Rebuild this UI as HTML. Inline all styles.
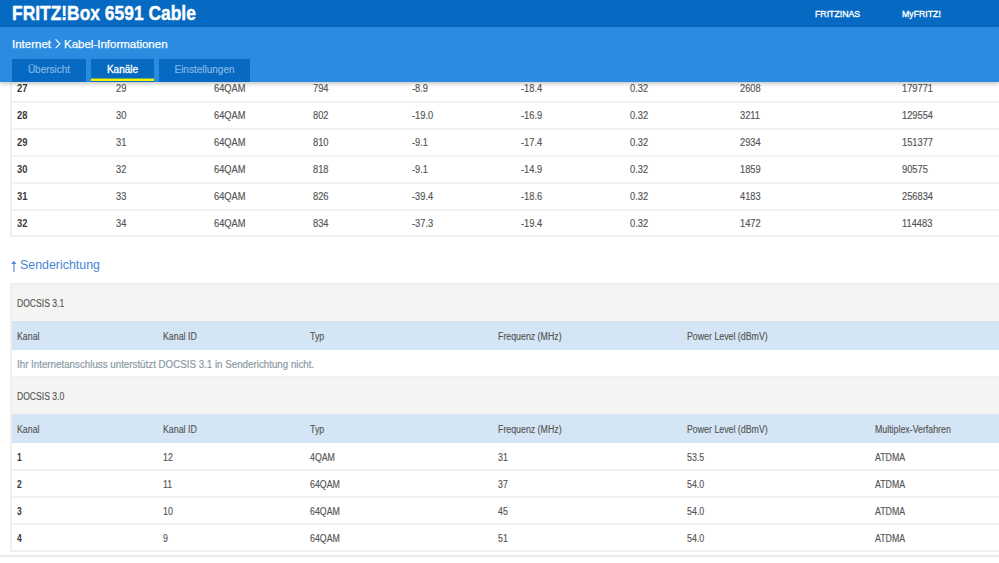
<!DOCTYPE html>
<html><head><meta charset="utf-8">
<style>
*{margin:0;padding:0;box-sizing:border-box}
html,body{width:999px;height:563px;overflow:hidden;background:#fff;font-family:"Liberation Sans",sans-serif;position:relative}
.abs{position:absolute;white-space:nowrap}
#hdr{position:absolute;left:0;top:0;width:999px;height:27px;background:#0669c2;z-index:10}
#band{position:absolute;left:0;top:27px;width:999px;height:55px;background:#2b8be0;box-shadow:0 2px 4px rgba(0,0,0,0.22);z-index:10}
#title{left:12px;top:1px;font-size:19.5px;font-weight:bold;color:#fff;line-height:24px;z-index:11;transform:scaleX(0.893);transform-origin:0 0;-webkit-text-stroke:0.4px #fff}
.nav{top:7px;font-size:9.3px;font-weight:normal;color:#fff;line-height:14px;z-index:11;-webkit-text-stroke:0.35px #fff;transform:scaleX(0.94);transform-origin:0 0}
#crumb{left:12px;top:37px;font-size:11.5px;color:#fff;line-height:14px;z-index:11}
.chev{position:absolute;left:55px;top:39px;z-index:11}
#crumb2{left:64px;top:37px;font-size:11.5px;color:#fff;line-height:14px;z-index:11}
.tab{position:absolute;top:59px;height:23px;background:#0669c2;color:#84b6e4;font-size:10px;text-align:center;line-height:21px;z-index:11}
.tab.act{color:#fff}
.tab.act:after{content:"";position:absolute;left:0;right:0;bottom:1px;height:3px;background:linear-gradient(to bottom,#6fa860 0,#6fa860 1px,#f2f500 1px,#f2f500 3px)}
.t1{position:absolute;left:10px;top:0;width:1000px;height:237px;border-left:2px solid #efefef;border-bottom:2px solid #efefef}
.t1 .c{margin-left:-12px}
.ln{position:absolute;left:0;width:1000px;height:2px;background:#f2f2f2}
.c{position:absolute;white-space:nowrap;font-size:10px;color:#555;line-height:12px;transform:scaleX(0.93);transform-origin:0 0;-webkit-text-stroke:0.15px #555}
.b{font-weight:bold;color:#3a3a3a;transform:scaleX(0.9);font-size:10.4px;-webkit-text-stroke:0}
#sender{left:20px;top:257px;font-size:12.4px;color:#4a86d4;line-height:16px}
.arrow{position:absolute;left:11px;top:260px}
.t2{position:absolute;left:10px;top:283px;width:1000px;height:269px;border:2px solid #efefef;border-right:none}
.grey{position:absolute;left:12px;width:1000px;background:#f4f4f2}
.blue{position:absolute;left:12px;width:1000px;background:#d4e6f5}
.ln2{position:absolute;left:12px;width:1000px;height:2px;background:#f1f1f1}
.foot{position:absolute;left:0;top:555px;width:999px;height:2px;background:#ececec}
.h{position:absolute;white-space:nowrap;font-size:10px;color:#555;line-height:12px;transform:scaleX(0.88);transform-origin:0 0}
.dh{font-size:11px;transform:scaleX(0.78)}
.msg{color:#8a9aa6;font-size:10.7px;transform:scaleX(0.913)}
.ub{font-weight:bold;color:#333;transform:scaleX(1)}
#crumb,#crumb2{-webkit-text-stroke:0.25px #fff}
.tab.act{-webkit-text-stroke:0.3px #fff}
.tab{-webkit-text-stroke:0.2px #84b6e4}
.h{-webkit-text-stroke:0.15px #555}
.msg{-webkit-text-stroke:0.2px #8a9aa6}
.ub{font-size:10px;-webkit-text-stroke:0;transform:scaleX(0.85);color:#3a3a3a}

</style></head><body>
<div class="t1">
<div class="c b" style="left:17px;top:83px">27</div><div class="c" style="left:115.5px;top:83px">29</div><div class="c" style="left:214px;top:83px">64QAM</div><div class="c" style="left:312.5px;top:83px">794</div><div class="c" style="left:412px;top:83px">-8.9</div><div class="c" style="left:521px;top:83px">-18.4</div><div class="c" style="left:630px;top:83px">0.32</div><div class="c" style="left:739.5px;top:83px">2608</div><div class="c" style="left:901.5px;top:83px">179771</div>
<div class="c b" style="left:17px;top:110px">28</div><div class="c" style="left:115.5px;top:110px">30</div><div class="c" style="left:214px;top:110px">64QAM</div><div class="c" style="left:312.5px;top:110px">802</div><div class="c" style="left:412px;top:110px">-19.0</div><div class="c" style="left:521px;top:110px">-16.9</div><div class="c" style="left:630px;top:110px">0.32</div><div class="c" style="left:739.5px;top:110px">3211</div><div class="c" style="left:901.5px;top:110px">129554</div>
<div class="c b" style="left:17px;top:137px">29</div><div class="c" style="left:115.5px;top:137px">31</div><div class="c" style="left:214px;top:137px">64QAM</div><div class="c" style="left:312.5px;top:137px">810</div><div class="c" style="left:412px;top:137px">-9.1</div><div class="c" style="left:521px;top:137px">-17.4</div><div class="c" style="left:630px;top:137px">0.32</div><div class="c" style="left:739.5px;top:137px">2934</div><div class="c" style="left:901.5px;top:137px">151377</div>
<div class="c b" style="left:17px;top:164px">30</div><div class="c" style="left:115.5px;top:164px">32</div><div class="c" style="left:214px;top:164px">64QAM</div><div class="c" style="left:312.5px;top:164px">818</div><div class="c" style="left:412px;top:164px">-9.1</div><div class="c" style="left:521px;top:164px">-14.9</div><div class="c" style="left:630px;top:164px">0.32</div><div class="c" style="left:739.5px;top:164px">1859</div><div class="c" style="left:901.5px;top:164px">90575</div>
<div class="c b" style="left:17px;top:191px">31</div><div class="c" style="left:115.5px;top:191px">33</div><div class="c" style="left:214px;top:191px">64QAM</div><div class="c" style="left:312.5px;top:191px">826</div><div class="c" style="left:412px;top:191px">-39.4</div><div class="c" style="left:521px;top:191px">-18.6</div><div class="c" style="left:630px;top:191px">0.32</div><div class="c" style="left:739.5px;top:191px">4183</div><div class="c" style="left:901.5px;top:191px">256834</div>
<div class="c b" style="left:17px;top:218px">32</div><div class="c" style="left:115.5px;top:218px">34</div><div class="c" style="left:214px;top:218px">64QAM</div><div class="c" style="left:312.5px;top:218px">834</div><div class="c" style="left:412px;top:218px">-37.3</div><div class="c" style="left:521px;top:218px">-19.4</div><div class="c" style="left:630px;top:218px">0.32</div><div class="c" style="left:739.5px;top:218px">1472</div><div class="c" style="left:901.5px;top:218px">114483</div>
<div class="ln" style="top:101px"></div><div class="ln" style="top:128px"></div><div class="ln" style="top:155px"></div><div class="ln" style="top:182px"></div><div class="ln" style="top:209px"></div></div>
<svg class="arrow" width="6" height="13" viewBox="0 0 6 13"><path d="M0.2 3.9 L2.9 0.8 L5.3 3.9 Z" fill="#4a86d4"/><rect x="2.4" y="2.5" width="1.1" height="9.4" fill="#4a86d4"/></svg><div class="abs" id="sender">Senderichtung</div>
<div class="t2"></div>
<div class="grey" style="top:285px;height:36px"></div><div class="blue" style="top:321px;height:29px"></div><div class="ln2" style="top:376px"></div><div class="grey" style="top:378px;height:36px"></div><div class="blue" style="top:414px;height:29px"></div><div class="ln2" style="top:469px"></div><div class="ln2" style="top:496px"></div><div class="ln2" style="top:523px"></div>
<div class="h dh" style="left:17px;top:297px">DOCSIS 3.1</div><div class="h" style="left:17px;top:331px">Kanal</div><div class="h" style="left:163px;top:331px">Kanal ID</div><div class="h" style="left:309.5px;top:331px">Typ</div><div class="h" style="left:498px;top:331px">Frequenz (MHz)</div><div class="h" style="left:686.5px;top:331px">Power Level (dBmV)</div><div class="h msg" style="left:17px;top:358px">Ihr Internetanschluss unterstützt DOCSIS 3.1 in Senderichtung nicht.</div><div class="h dh" style="left:17px;top:390px">DOCSIS 3.0</div><div class="h" style="left:17px;top:424px">Kanal</div><div class="h" style="left:163px;top:424px">Kanal ID</div><div class="h" style="left:309.5px;top:424px">Typ</div><div class="h" style="left:498px;top:424px">Frequenz (MHz)</div><div class="h" style="left:686.5px;top:424px">Power Level (dBmV)</div><div class="h" style="left:875px;top:424px">Multiplex-Verfahren</div>
<div class="h ub" style="left:17px;top:452px">1</div><div class="h ud" style="left:163px;top:452px">12</div><div class="h ud" style="left:309.5px;top:452px">4QAM</div><div class="h ud" style="left:498px;top:452px">31</div><div class="h ud" style="left:686.5px;top:452px">53.5</div><div class="h ud" style="left:875px;top:452px">ATDMA</div>
<div class="h ub" style="left:17px;top:479px">2</div><div class="h ud" style="left:163px;top:479px">11</div><div class="h ud" style="left:309.5px;top:479px">64QAM</div><div class="h ud" style="left:498px;top:479px">37</div><div class="h ud" style="left:686.5px;top:479px">54.0</div><div class="h ud" style="left:875px;top:479px">ATDMA</div>
<div class="h ub" style="left:17px;top:506px">3</div><div class="h ud" style="left:163px;top:506px">10</div><div class="h ud" style="left:309.5px;top:506px">64QAM</div><div class="h ud" style="left:498px;top:506px">45</div><div class="h ud" style="left:686.5px;top:506px">54.0</div><div class="h ud" style="left:875px;top:506px">ATDMA</div>
<div class="h ub" style="left:17px;top:533px">4</div><div class="h ud" style="left:163px;top:533px">9</div><div class="h ud" style="left:309.5px;top:533px">64QAM</div><div class="h ud" style="left:498px;top:533px">51</div><div class="h ud" style="left:686.5px;top:533px">54.0</div><div class="h ud" style="left:875px;top:533px">ATDMA</div>
<div class="foot"></div>
<div id="hdr"></div>
<div id="band"></div>
<div class="abs" id="title">FRITZ!Box 6591 Cable</div>
<div class="abs nav" style="left:815px">FRITZ!NAS</div>
<div class="abs nav" style="left:902px">MyFRITZ!</div>
<div class="abs" id="crumb">Internet</div><svg class="chev" width="6" height="10" viewBox="0 0 6 10"><path d="M0.6 0.4 L4.9 4.8 L0.6 9.2" fill="none" stroke="#fff" stroke-width="1.2"/></svg><div class="abs" id="crumb2">Kabel-Informationen</div>
<div class="tab" style="left:12px;width:74px">&Uuml;bersicht</div>
<div class="tab act" style="left:91px;width:63px">Kan&auml;le</div>
<div class="tab" style="left:159px;width:91px">Einstellungen</div>
</body></html>
